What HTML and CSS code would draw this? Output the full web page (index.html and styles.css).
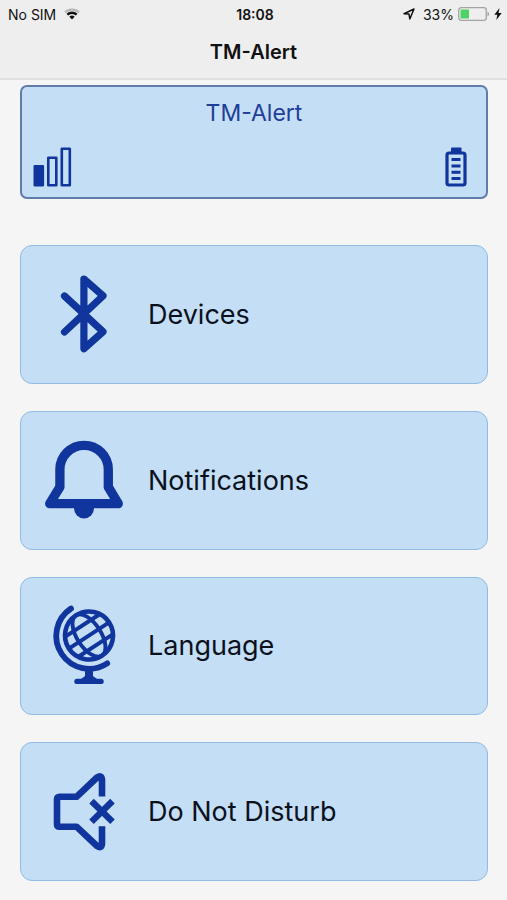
FILE: index.html
```
<!DOCTYPE html>
<html lang="en">
<head>
    <meta charset="UTF-8">
    <meta name="viewport" content="width=device-width, initial-scale=1">
    <title>TM-Alert</title>
    <link rel="stylesheet" href="styles.css">
</head>
<body>
<header class="top">
    <div class="status-bar">
        <div class="status-left">
            <span>No SIM</span>
            <svg class="wifi" width="16" height="12" viewBox="0 0 16 12" fill="none">
                <path d="M1 4.300a10 10 0 0 1 14 0" stroke="#b4b4b4" stroke-width="2"/>
                <path d="M3.300 6.700a6.700 6.700 0 0 1 9.400 0" stroke="#111" stroke-width="2.400"/>
                <path d="M8 11.500L5.300 8.800a3.900 3.900 0 0 1 5.400 0z" fill="#111"/>
            </svg>
        </div>
        <time class="clock">18:08</time>
        <div class="status-right">
            <svg width="12" height="12" viewBox="0 0 12 12" fill="none" stroke="#111" stroke-width="1.500" stroke-linejoin="round">
                <path d="M1 5.800L11 1 6.800 11 6 6z"/>
            </svg>
            <span class="percent">33%</span>
            <svg width="32" height="14" viewBox="0 0 32 14">
                <rect x="0.700" y="0.700" width="27.600" height="12.600" rx="2.500" fill="none" stroke="#a3a3a3" stroke-width="1.300"/>
                <rect x="2.500" y="2.500" width="8.500" height="9" fill="#4cd265"/>
                <path d="M29.500 4.800a2.300 2.300 0 0 1 0 4.400z" fill="#a3a3a3"/>
            </svg>
            <svg width="8" height="12" viewBox="0 0 8 12">
                <path d="M5.500 0L0.300 6.800h3L2.300 12 7.700 5H4.500z" fill="#111"/>
            </svg>
        </div>
    </div>
    <h1 class="title">TM-Alert</h1>
</header>

<main class="content">
    <section class="device">
        <h2 class="device-name">TM-Alert</h2>
        <div class="device-state">
            <svg width="40" height="40" viewBox="0 0 40 40" fill="none" stroke="#10359c" stroke-width="2.600" stroke-linejoin="round">
                <rect x="1.800" y="19.300" width="8" height="19" fill="#10359c"/>
                <rect x="15.300" y="10.800" width="8" height="27.500"/>
                <rect x="28.800" y="1.800" width="8" height="36.500"/>
            </svg>
            <svg width="22" height="40" viewBox="0 0 22 40">
                <rect x="6" y="0.500" width="10.500" height="6" rx="1" fill="#10359c"/>
                <rect x="2" y="6" width="18" height="32" rx="2" fill="none" stroke="#10359c" stroke-width="3.200"/>
                <path d="M6.500 12.500h9M6.500 19h9M6.500 25.300h9M6.500 31.600h9" stroke="#10359c" stroke-width="3"/>
            </svg>
        </div>
    </section>

    <nav class="menu">
        <button type="button" class="menu-item">
            <svg class="icon" viewBox="0 0 80 80" stroke-width="7.200" stroke-linecap="round" stroke-linejoin="round">
                <path d="M20.500 22L59 57.700 39.900 74.800V5L59 21.800 20.500 58"/>
            </svg>
            <span>Devices</span>
        </button>
        <button type="button" class="menu-item">
            <svg class="icon" viewBox="0 0 80 80" stroke-width="9.300" stroke-linejoin="round">
                <path d="M15.900 29.500a24.200 24.200 0 0 1 48.400 0V47L74.300 63.700H5.700L15.900 47z"/>
                <path d="M30 66v2.500a10 10 0 0 0 20 0V66z" fill="#10359c" stroke="none"/>
            </svg>
            <span>Notifications</span>
        </button>
        <button type="button" class="menu-item">
            <svg class="icon" viewBox="0 0 80 80" stroke-linecap="round" stroke-linejoin="round">
                <g transform="rotate(-33 45 29.500)" stroke-width="4">
                    <circle cx="45" cy="29.500" r="24" stroke-width="4.600"/>
                    <ellipse cx="45" cy="29.500" rx="12" ry="24"/>
                    <path d="M21 29.500h48M25 17.500h40M25 41.500h40"/>
                </g>
                <path d="M27 2.500A32 32 0 0 0 63.200 57.300" stroke-width="5.800"/>
                <path d="M41 61h8v9l4 3H37l4-3z" fill="#10359c" stroke="none"/>
                <path d="M33 75.400h24" stroke-width="5.400"/>
            </svg>
            <span>Language</span>
        </button>
        <button type="button" class="menu-item">
            <svg class="icon" viewBox="0 0 80 80" stroke-width="6.600" stroke-linejoin="round">
                <path d="M58 24.500V7.500Q57.500 2.500 53 5.500L32.500 24.800H15.500q-2.500 0-2.500 2.500V52.200q0 2.500 2.500 2.500H32.500L53 74q4.500 3 5-2V54.300"/>
                <path d="M47.500 29.100L68.500 49.700M68.500 29.100L47.500 49.700" stroke-width="6.400"/>
            </svg>
            <span>Do Not Disturb</span>
        </button>
    </nav>
</main>
</body>
</html>
```
FILE: styles.css
```
* {
    box-sizing: border-box;
}

body {
    display: flex;
    flex-direction: column;
    min-height: 100vh;
    margin: 0;
    background-color: #f5f5f5;
    color: #111;
    font-family: Inter, "Liberation Sans", sans-serif;
}

h1, h2 {
    margin: 0;
}

svg {
    display: block;
    flex: none;
}

.top {
    padding-bottom: 12px;
    background-color: #eee;
    border-bottom: 2px solid #e0e0e0;
}

.status-bar {
    display: grid;
    grid-template-columns: 1fr auto 1fr;
    align-items: center;
    height: 28px;
    padding: 0 5px 0 8px;
    font-size: 14px;
}

.status-left, .status-right {
    display: flex;
    align-items: center;
    gap: 8px;
}

.status-right {
    justify-content: flex-end;
    gap: 4px;
}

.percent {
    margin-left: 4px;
}

.clock {
    font-weight: 600;
}

.title {
    font-size: 20px;
    font-weight: 600;
    line-height: 24px;
    padding: 12px 0 2px;
    text-align: center;
}

.content {
    display: flex;
    flex: 1;
    flex-direction: column;
    gap: 46px;
    padding: 5px 19px 19px 20px;
}

.device {
    padding: 12px 0 10px;
    border: 2px solid #617bab;
    border-radius: 7px;
    background-color: #c4def6;
}

.device-name {
    color: #1f3d99;
    font-size: 23px;
    font-weight: 400;
    line-height: 28px;
    text-align: center;
}

.device-state {
    display: flex;
    justify-content: space-between;
    padding: 20px 19px 0 11px;
}

.menu {
    display: grid;
    flex: 1;
    grid-auto-rows: 1fr;
    gap: 27px;
}

.menu-item {
    display: flex;
    align-items: center;
    gap: 24px;
    min-height: 100px;
    padding: 0 23px;
    border: 1px solid #92bbe2;
    border-radius: 12px;
    background-color: #c4def6;
    color: #0b111c;
    font-family: inherit;
    font-size: 27px;
    text-align: left;
    cursor: pointer;
}

.icon {
    width: 80px;
    height: 80px;
    overflow: visible;
    fill: none;
    stroke: #10359c;
}
```
